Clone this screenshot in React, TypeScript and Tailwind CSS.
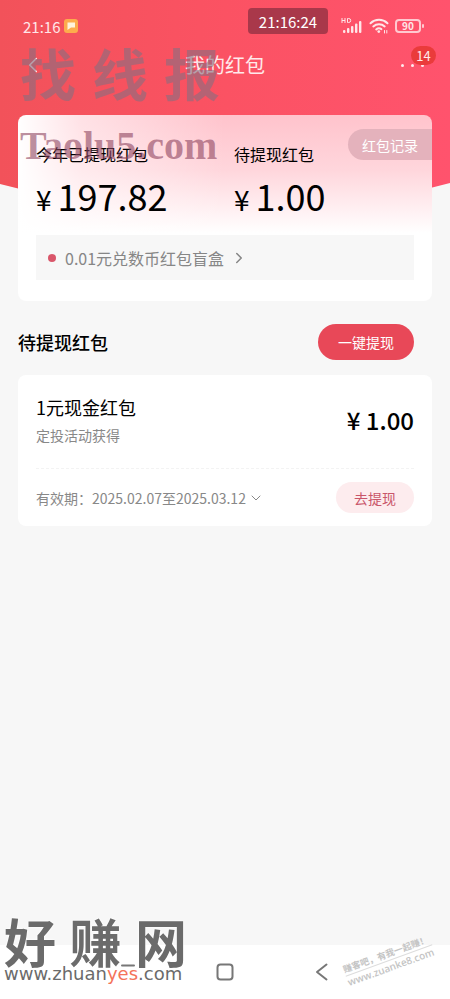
import { ChevronDown, ChevronLeft, ChevronRight } from 'lucide-react'

interface Coupon {
  id: number
  title: string
  source: string
  amount: string
  from: string
  to: string
}

const totals = [
  { label: '今年已提现红包', amount: '197.82' },
  { label: '待提现红包', amount: '1.00' }
]

const coupons: Coupon[] = [
  { id: 1, title: '1元现金红包', source: '定投活动获得', amount: '1.00', from: '2025.02.07', to: '2025.03.12' }
]

function SignalIcon() {
  return (
    <svg width="22" height="16" viewBox="0 0 22 16" fill="currentColor" aria-hidden="true">
      <path d="M1 0v5M4 0v5M1 2.5h3M6.5 .5v4h1.2a1.8 1.8 0 0 0 0-4z" fill="none" stroke="currentColor" strokeWidth="1" />
      <rect x="2" y="12" width="2.4" height="3" rx="1" />
      <rect x="6" y="10" width="2.4" height="5" rx="1" />
      <rect x="10" y="8" width="2.4" height="7" rx="1" />
      <rect x="14" y="5.5" width="2.4" height="9.5" rx="1" />
      <rect x="18" y="3" width="2.4" height="12" rx="1" />
    </svg>
  )
}

function WifiIcon() {
  return (
    <svg width="20" height="16" viewBox="0 0 20 16" fill="none" stroke="currentColor" strokeWidth="2" strokeLinecap="round" aria-hidden="true">
      <path d="M1.5 5.2a12.5 12.5 0 0 1 17 0M4.3 8.4a8.4 8.4 0 0 1 11.4 0M7.2 11.4a4.2 4.2 0 0 1 5.2-.3" />
      <circle cx="9.8" cy="13.6" r="1.4" fill="currentColor" stroke="none" />
      <path d="M15.5 12.5v2.5M17.8 12.5v2.5" strokeWidth="1" />
    </svg>
  )
}

function StatusBar() {
  return (
    <div className="relative flex h-11 items-center justify-between pt-2 pr-[26px] pl-[23px] text-[#ffe6e8]">
      <div className="flex items-center gap-1">
        <span className="text-[15px] leading-none">21:16</span>
        <svg width="14" height="14" viewBox="0 0 14 14" aria-hidden="true">
          <rect width="14" height="14" rx="3" fill="#fdac4c" />
          <path d="M3.5 3.5h7.5v5H7L3.5 11z" fill="#fff3dc" />
        </svg>
      </div>
      <div className="flex items-center gap-1.5">
        <SignalIcon />
        <WifiIcon />
        <span className="flex items-center gap-px">
          <span className="flex h-3.5 w-[26px] items-center justify-center rounded border-2 border-[#ffc9d0] text-[10px] leading-none font-bold">
            90
          </span>
          <span className="h-1 w-0.5 rounded-full bg-[#ffc9d0]" />
        </span>
      </div>
      <span className="absolute top-2 right-[122px] flex h-[26px] w-20 items-center justify-center rounded bg-[#a9384a] text-[15px] leading-none text-white">
        21:16:24
      </span>
    </div>
  )
}

function TitleBar() {
  return (
    <header className="relative flex h-[42px] items-center justify-center text-[#ffe9eb]">
      <button className="absolute left-5" aria-label="返回">
        <ChevronLeft size={26} strokeWidth={1.5} />
      </button>
      <h1 className="text-xl leading-none">我的红包</h1>
      <button className="absolute right-[26px] flex gap-[7px]" aria-label="更多">
        <span className="size-[3px] rounded-full bg-current" />
        <span className="size-[3px] rounded-full bg-current" />
        <span className="size-[3px] rounded-full bg-current" />
      </button>
      <span className="absolute top-0.5 right-3.5 flex h-[19px] w-[25px] items-center justify-center rounded-full bg-[#ea3b3b] text-[13px] leading-none">
        14
      </span>
    </header>
  )
}

function Summary() {
  return (
    <section className="relative rounded-lg bg-white bg-[linear-gradient(to_right,#fff,#ffffff80_15%,#ffffff00_50%),linear-gradient(to_bottom,#ffc3cc,#ffd6dc_55px,#fff_118px)] px-[18px] pt-[27px] pb-[21px]">
      <div className="grid grid-cols-2 gap-[18px]">
        {totals.map((t) => (
          <div key={t.label}>
            <p className="text-base leading-6">{t.label}</p>
            <p className="mt-[11px] flex h-10 items-baseline gap-1.5 text-4xl leading-9">
              <span className="text-[28px] leading-9">¥</span>
              {t.amount}
            </p>
          </div>
        ))}
      </div>
      <button className="absolute top-3.5 right-0 h-[31px] rounded-l-full bg-[#e4b2bc] px-3.5 text-sm text-white">
        红包记录
      </button>
      <button className="mt-[18px] flex h-[45px] w-full items-center bg-[#f7f7f7] px-3 text-base text-[#868686]">
        <span className="mr-[9px] size-2 rounded-full bg-[#d9566a]" />
        0.01元兑数币红包盲盒
        <ChevronRight size={18} strokeWidth={2} className="ml-1.5" />
      </button>
    </section>
  )
}

function CouponCard({ coupon }: { coupon: Coupon }) {
  return (
    <li className="rounded-lg bg-white px-[18px]">
      <div className="flex items-center justify-between border-b border-dashed border-[#f3f3f3] pt-5 pb-[23px]">
        <div>
          <h3 className="text-lg leading-6">{coupon.title}</h3>
          <p className="mt-1.5 text-sm leading-5 text-[#888]">{coupon.source}</p>
        </div>
        <p className="text-2xl leading-8 font-medium">
          ¥ {coupon.amount}
        </p>
      </div>
      <div className="flex h-[57px] items-center justify-between text-sm">
        <button className="flex items-center text-[#888]">
          有效期：{coupon.from}至{coupon.to}
          <ChevronDown size={16} strokeWidth={1.5} className="ml-0.5" />
        </button>
        <button className="h-[31px] rounded-full bg-[#fdecee] px-[18px] text-[#c9566a]">去提现</button>
      </div>
    </li>
  )
}

function SystemNav() {
  return (
    <nav className="flex h-[54px] items-center justify-center gap-[79px] bg-white text-[#777]">
      <button aria-label="最近任务">
        <svg width="18" height="18" viewBox="0 0 18 18" fill="none" stroke="currentColor" strokeWidth="2" strokeLinecap="round">
          <path d="M3 2.5h12" />
        </svg>
      </button>
      <button aria-label="主屏幕">
        <svg width="18" height="18" viewBox="0 0 18 18" fill="none" stroke="currentColor" strokeWidth="2">
          <rect x="1.5" y="1.5" width="15" height="15" rx="3" />
        </svg>
      </button>
      <button aria-label="返回上一页">
        <svg width="18" height="18" viewBox="0 0 18 18" fill="none" stroke="currentColor" strokeWidth="2" strokeLinecap="round" strokeLinejoin="round">
          <path d="M13.5 1.5 4 9l9.5 7.5" />
        </svg>
      </button>
    </nav>
  )
}

// marks stamped over the page by the sites that shared it
function Stamps() {
  return (
    <div className="pointer-events-none">
      <div className="absolute top-[44px] left-5 flex w-[200px] justify-between text-[56px] leading-[56px] font-bold text-[#867080]/60">
        <span>找</span>
        <span>线</span>
        <span>报</span>
      </div>
      <p className="absolute top-[118px] left-5 font-['Liberation_Serif',serif] text-[40px] leading-[56px] font-bold text-[#8f4560]/60">
        Taolu5.com
      </p>
      <div className="absolute bottom-[15px] left-1 w-[183px] text-[#6b6b6b]">
        <div className="flex justify-between text-[52px] leading-[46px] font-bold [text-shadow:0_0_2px_#fff,0_0_3px_#fff]">
          <span>好</span>
          <span>赚</span>
          <span>网</span>
        </div>
        <p className="font-['DejaVu_Sans',sans-serif] text-[18px] leading-5 [text-shadow:0_0_2px_#fff,0_0_2px_#fff]">
          www.zhuan<span className="text-[#f4735a]">yes</span>.com
        </p>
      </div>
      <div className="absolute right-[15px] bottom-[26px] w-[92px] -rotate-20 text-[#c4c4c4]">
        <p className="border-b border-[#ddd] text-[9px] leading-3 font-bold whitespace-nowrap">赚客吧，有我一起赚！</p>
        <p className="font-['Open_Sans',sans-serif] text-[10px] leading-3 font-semibold whitespace-nowrap">
          www.zuanke8.com
        </p>
      </div>
    </div>
  )
}

export default function App() {
  return (
    <div className="relative flex min-h-screen flex-col overflow-hidden bg-[#f7f7f7] font-['Noto_Sans_CJK_SC',sans-serif] text-black">
      <div className="absolute inset-x-0 top-0 h-[240px] bg-linear-to-r from-[#f2525a] via-[#fb5263] to-[#ff536d] [clip-path:polygon(0_0,100%_0,100%_183px,50%_100%,0_184px)]" />
      <div className="relative flex flex-1 flex-col">
        <StatusBar />
        <TitleBar />
        <main className="flex-1 px-[18px] pt-[29px]">
          <Summary />
          <div className="mt-[23px] flex items-center justify-between pr-[18px]">
            <h2 className="text-lg leading-6 font-medium">待提现红包</h2>
            <button className="h-9 rounded-full bg-[#e84858] px-5 text-sm text-white">一键提现</button>
          </div>
          <ul className="mt-[15px]">
            {coupons.map((c) => (
              <CouponCard key={c.id} coupon={c} />
            ))}
          </ul>
        </main>
        <SystemNav />
      </div>
      <Stamps />
    </div>
  )
}
